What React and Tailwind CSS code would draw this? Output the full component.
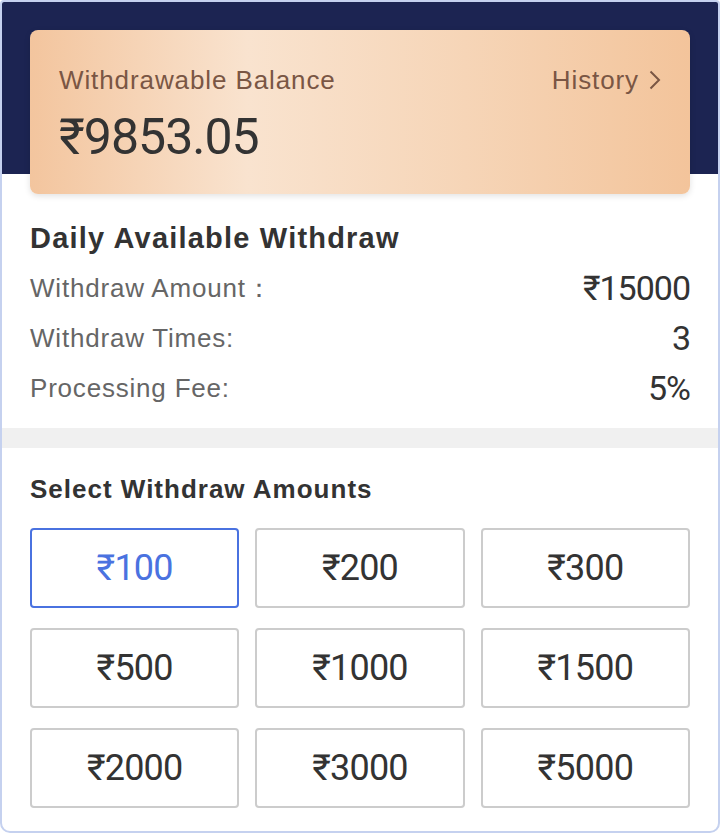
const amounts = [100, 200, 300, 500, 1000, 1500, 2000, 3000, 5000];

const rows = [
  { label: 'Withdraw Amount：', value: '₹15000' },
  { label: 'Withdraw Times:', value: '3' },
  { label: 'Processing Fee:', value: '5%' },
];

export default function App() {
  const selected = 100;

  return (
    <div className="w-[720px] h-[833px] bg-white border-2 border-[#c5d1ef] rounded-b-[10px] rounded-t-[4px] overflow-hidden font-['Liberation_Sans',sans-serif]">
      {/* header with balance card */}
      <div className="bg-[#1c2452] h-[172px] px-[28px] pt-[28px]">
        <div className="h-[164px] rounded-[8px] shadow-[0_2px_6px_rgba(0,0,0,0.12)] bg-[linear-gradient(90deg,#f3c59e_0%,#f9e3cf_33%,#f6d5b7_66%,#f3c49b_100%)] px-[29px] pt-[35px]">
          <div className="flex items-center justify-between text-[26px] leading-[30px] tracking-[0.9px] text-[#7a5644]">
            <span>Withdrawable Balance</span>
            <span className="flex items-center gap-[10px]">
              History
              <svg width="12" height="20" viewBox="0 0 12 20" fill="none" stroke="currentColor" strokeWidth="2">
                <polyline points="1.5,1.5 10,10 1.5,18.5" />
              </svg>
            </span>
          </div>
          <div className="mt-[14px] text-[50px] leading-[56px] tracking-[-1px] text-[#333] font-['Roboto',sans-serif]">
            ₹9853.05
          </div>
        </div>
      </div>

      {/* daily limits */}
      <div className="px-[28px] pt-[47px] pb-[15px]">
        <div className="text-[29px] leading-[34px] tracking-[1.2px] font-bold text-[#333]">Daily Available Withdraw</div>
        <div className="mt-[8px] flex flex-col">
          {rows.map((r) => (
            <div key={r.label} className="flex items-center justify-between h-[50px]">
              <span className="text-[26px] tracking-[0.8px] text-[#666]">{r.label}</span>
              <span className="text-[34px] tracking-[-1px] text-[#333] font-['Roboto',sans-serif]">{r.value}</span>
            </div>
          ))}
        </div>
      </div>

      <div className="h-[20px] bg-[#f0f0f0]" />

      {/* amount picker */}
      <div className="px-[28px] pt-[26px]">
        <div className="text-[26px] leading-[30px] tracking-[1px] font-bold text-[#333]">Select Withdraw Amounts</div>
        <div className="mt-[24px] grid grid-cols-3 gap-x-[16px] gap-y-[20px]">
          {amounts.map((a) => (
            <button
              key={a}
              className={`h-[80px] rounded-[4px] border-2 text-[36px] tracking-[-0.8px] font-['Roboto',sans-serif] ${
                a === selected ? 'border-[#4a72e0] text-[#4a72e0]' : 'border-[#cccccc] text-[#333]'
              }`}
            >
              ₹{a}
            </button>
          ))}
        </div>
      </div>
    </div>
  );
}
